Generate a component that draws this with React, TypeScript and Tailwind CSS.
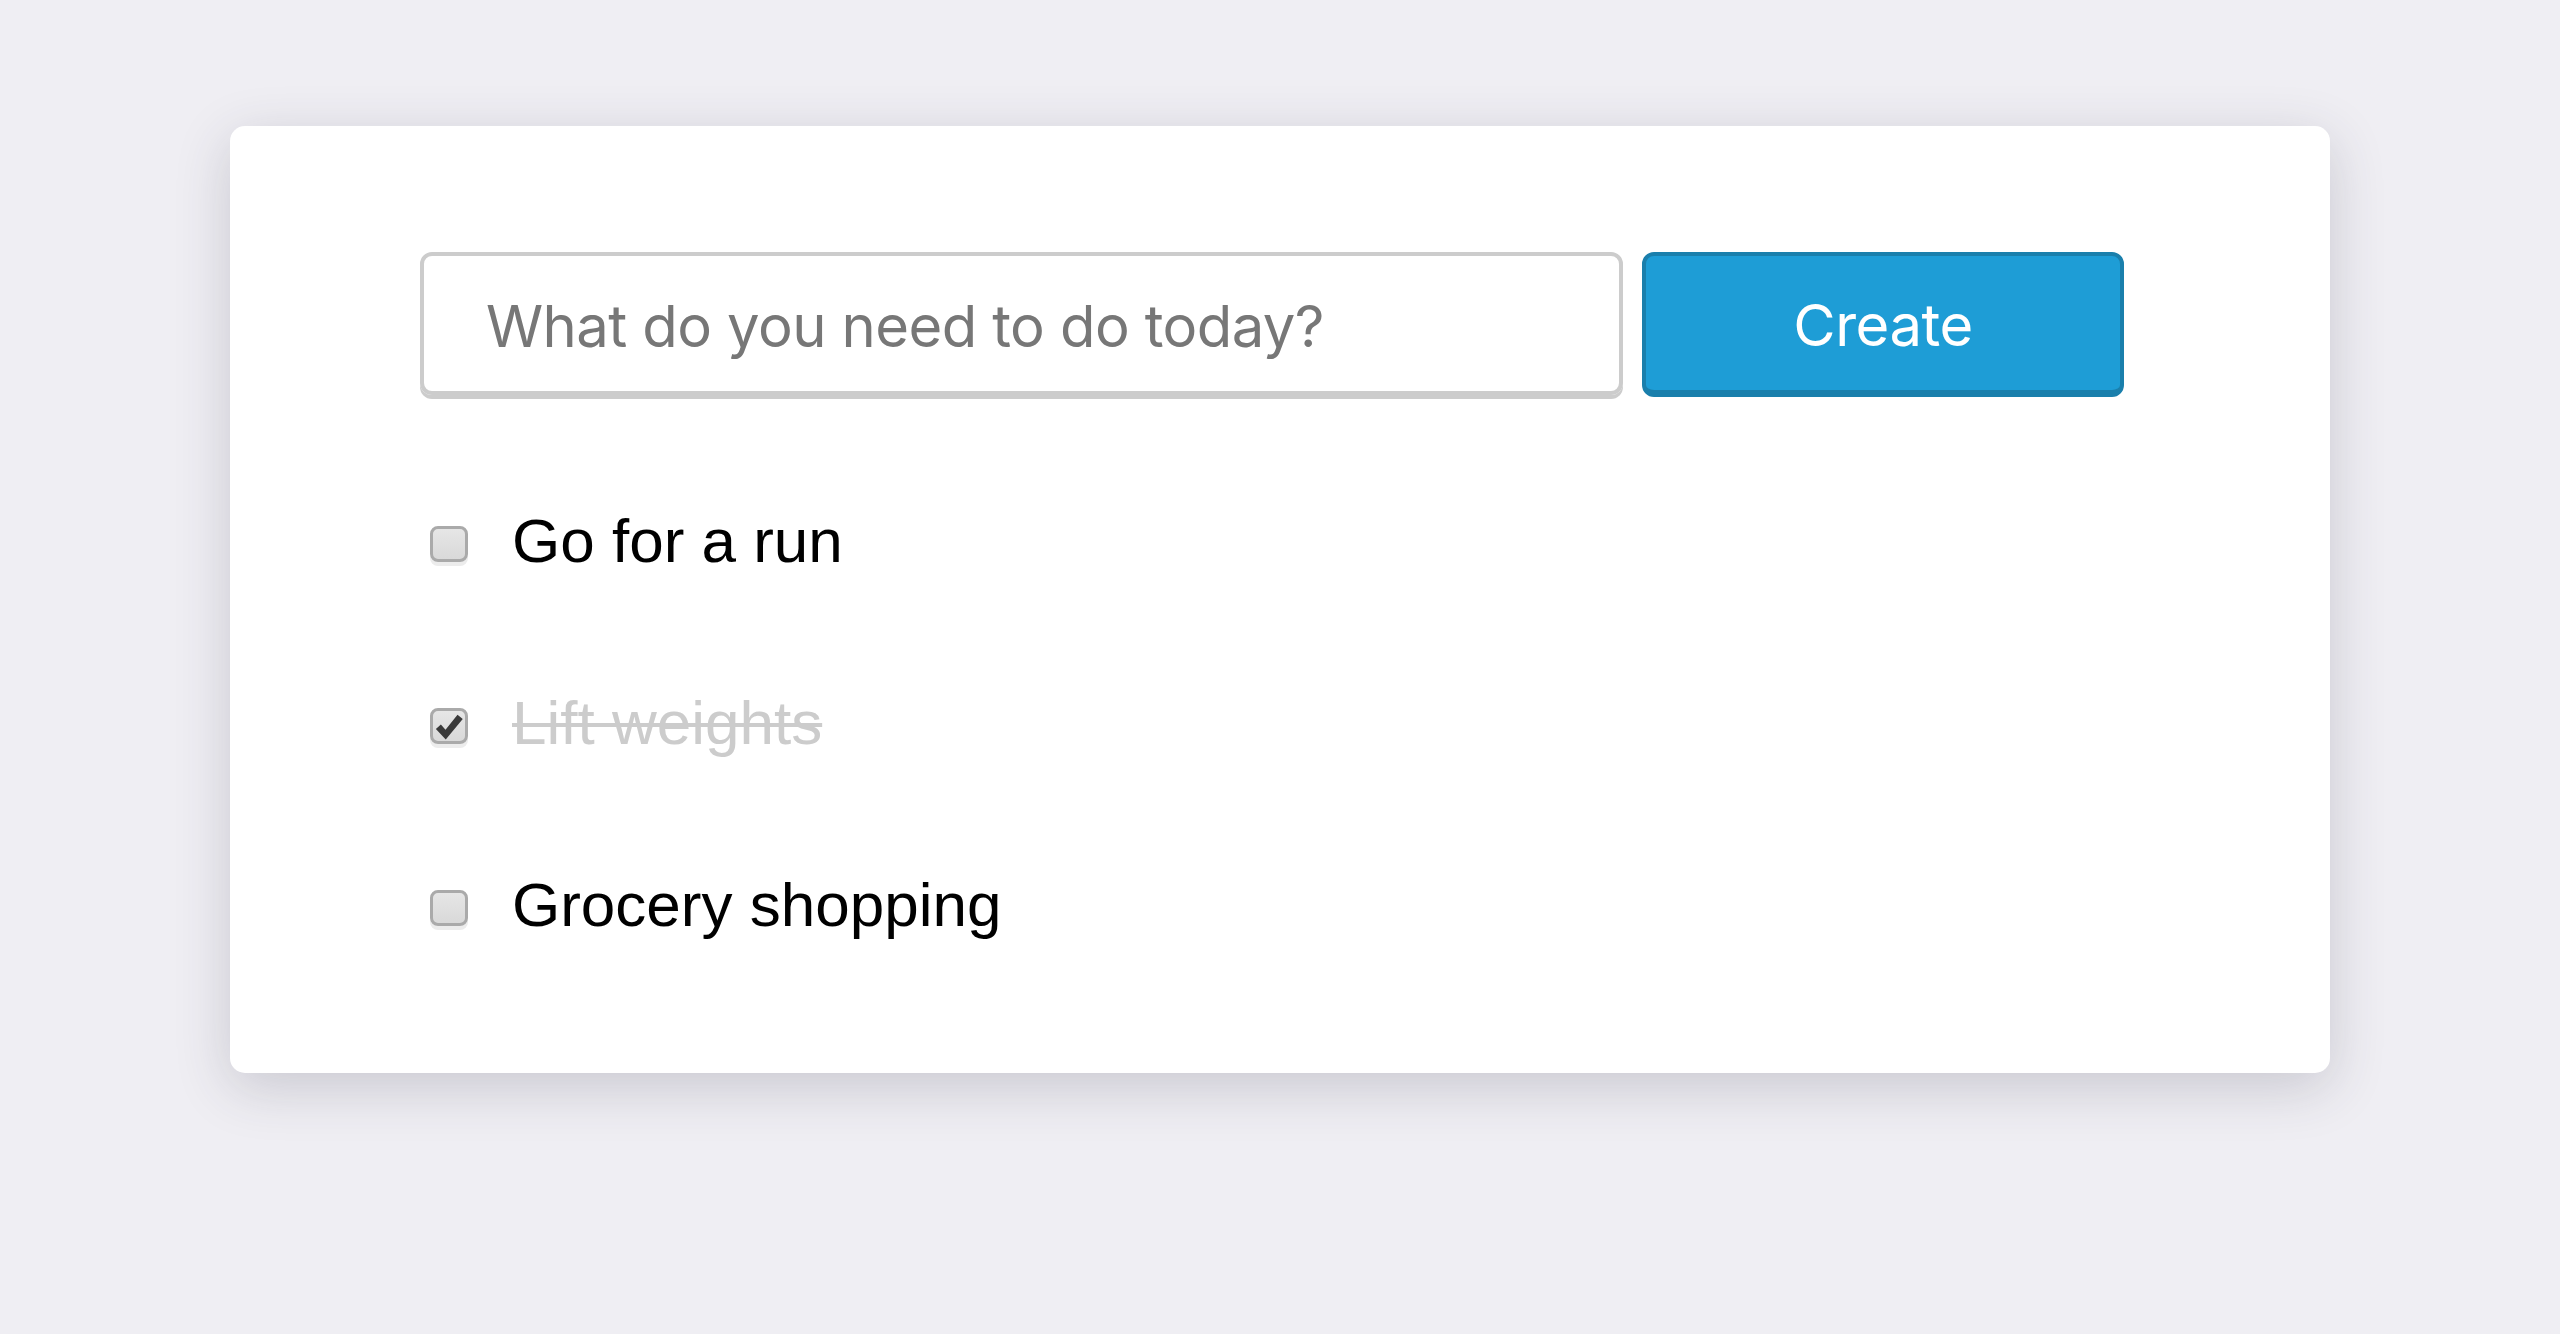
import React from "react";

function Check({ checked }: { checked: boolean }) {
  return (
    <div className="relative w-[38px] h-[36px] shrink-0 rounded-[8px] border-[3px] border-[#aaaaaa] bg-gradient-to-b from-[#e6e6e6] to-[#d9d9d9] shadow-[0_4px_0_#ececec]">
      {checked && (
        <svg viewBox="0 0 24 24" className="absolute left-[1px] top-[1px] w-[30px] h-[30px]">
          <path d="M1.5 13.5 L5.5 10 L9.2 14.2 L18.8 2.2 L23 5.6 L9.4 22 Z" fill="#3a3a3a" />
        </svg>
      )}
    </div>
  );
}

const items = [
  { text: "Go for a run", done: false },
  { text: "Lift weights", done: true },
  { text: "Grocery shopping", done: false },
];

export default function App() {
  return (
    <div className="w-full h-[1334px] bg-[#efeef3] pt-[126px] pl-[230px]">
      <div className="w-[2100px] h-[947px] bg-white rounded-[15px] shadow-[0_14px_55px_rgba(50,50,70,0.2)] pt-[126px] pl-[190px]">
        <div className="flex items-start gap-[19px]">
          <div className="w-[1203px] h-[143px] rounded-[12px] border-[4px] border-[#cccccc] shadow-[0_4px_0_#cccccc] flex items-center pl-[62px] pt-[6px]">
            <span className="text-[#777777] text-[58px] tracking-[-0.6px]" style={{ fontFamily: "Inter, 'Liberation Sans', sans-serif" }}>
              What do you need to do today?
            </span>
          </div>
          <button className="w-[482px] h-[145px] rounded-[12px] bg-[#1e9dd6] border-[4px] border-[#1a7fac] border-b-[7px] flex items-center justify-center pt-[4px] text-white text-[58px] tracking-[-0.5px]" style={{ fontFamily: "Inter, 'Liberation Sans', sans-serif" }}>
            Create
          </button>
        </div>
        <div className="mt-[56px] flex flex-col">
          {items.map((it) => (
            <div key={it.text} className="h-[182px] flex items-center pl-[10px] gap-[44px]">
              <Check checked={it.done} />
              <span
                className={
                  it.done
                    ? "mb-[6px] text-[62px] text-[#cccccc] line-through decoration-[#cccccc] decoration-[4px] leading-none"
                    : "mb-[6px] text-[62px] text-black leading-none"
                }
                style={{ fontFamily: "'Liberation Sans', Arial, sans-serif" }}
              >
                {it.text}
              </span>
            </div>
          ))}
        </div>
      </div>
    </div>
  );
}
